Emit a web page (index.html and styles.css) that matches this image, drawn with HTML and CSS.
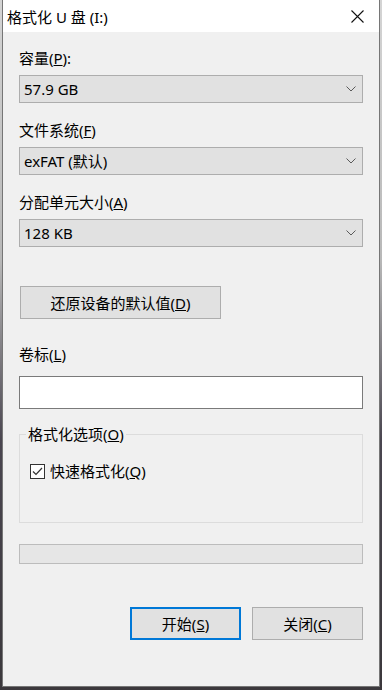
FILE: index.html
```html
<!DOCTYPE html>
<html>
<head>
    <title>格式化 U 盘 (I:)</title>
    <link rel="stylesheet" href="styles.css">
</head>
<body>
    <div class="window">
        <div class="titlebar">
            <span class="title">格式化 U 盘 (I:)</span>
            <span class="close">
                <svg width="13" height="13" viewBox="0 0 13 13">
                    <path d="M0.5 0.5 L12.5 12.5 M12.5 0.5 L0.5 12.5" stroke="#111" stroke-width="1.1" fill="none"/>
                </svg>
            </span>
        </div>
        <div class="content">
            <label class="field-label">容量(<u>P</u>):</label>
            <div class="combo">
                <span>57.9 GB</span>
                <svg class="chevron" width="10" height="6" viewBox="0 0 10 6"><polyline points="0.5,0.5 5,5 9.5,0.5" fill="none" stroke="#5a5a5a" stroke-width="1"/></svg>
            </div>

            <label class="field-label">文件系统(<u>F</u>)</label>
            <div class="combo">
                <span>exFAT (默认)</span>
                <svg class="chevron" width="10" height="6" viewBox="0 0 10 6"><polyline points="0.5,0.5 5,5 9.5,0.5" fill="none" stroke="#5a5a5a" stroke-width="1"/></svg>
            </div>

            <label class="field-label">分配单元大小(<u>A</u>)</label>
            <div class="combo">
                <span>128 KB</span>
                <svg class="chevron" width="10" height="6" viewBox="0 0 10 6"><polyline points="0.5,0.5 5,5 9.5,0.5" fill="none" stroke="#5a5a5a" stroke-width="1"/></svg>
            </div>

            <button class="btn btn-restore">还原设备的默认值(<u>D</u>)</button>

            <label class="field-label label-volume" for="volume">卷标(<u>L</u>)</label>
            <input type="text" id="volume" class="text-input">

            <fieldset class="group">
                <legend>格式化选项(<u>O</u>)</legend>
                <div class="check-row">
                    <span class="checkbox">
                        <svg width="15" height="15" viewBox="0 0 15 15"><polyline points="3,7.5 6,10.5 12,4" fill="none" stroke="#333" stroke-width="1.2"/></svg>
                    </span>
                    <span>快速格式化(<u>Q</u>)</span>
                </div>
            </fieldset>

            <div class="progress"></div>

            <div class="actions">
                <button class="btn btn-action btn-default">开始(<u>S</u>)</button>
                <button class="btn btn-action">关闭(<u>C</u>)</button>
            </div>
        </div>
    </div>
</body>
</html>
```

FILE: styles.css
```css
html, body {
    margin: 0;
    height: 100%;
}

body {
    background: linear-gradient(#d4d4d4 0, #b8b8b8 260px, #4a4650 440px, #3b383c 100%);
    font-family: "Noto Sans", "Noto Sans CJK SC", sans-serif;
    font-size: 15px;
    color: #000;
    overflow: hidden;
}

.window {
    width: 378px;
    height: 687px;
    margin-left: 2px;
    box-sizing: border-box;
    border: 1px solid #767676;
    border-top: none;
    background: #f0f0f0;
}

.titlebar {
    height: 32px;
    background: #fff;
    display: flex;
    align-items: center;
    justify-content: space-between;
    padding-left: 4px;
}

.title {
    line-height: 20px;
    padding-top: 1px;
}

.close {
    width: 46px;
    height: 32px;
    display: flex;
    align-items: center;
    justify-content: center;
    padding-left: 3px;
    box-sizing: border-box;
}

.content {
    padding: 16px 16px 0 16px;
}

.field-label {
    display: block;
    height: 20px;
    line-height: 20px;
    margin-bottom: 7px;
}

.combo {
    height: 28px;
    box-sizing: border-box;
    border: 1px solid #adadad;
    background: #e1e1e1;
    display: flex;
    align-items: center;
    justify-content: space-between;
    padding: 0 6px 0 4px;
    margin-bottom: 17px;
    line-height: 20px;
}

.btn {
    font-family: inherit;
    font-size: 15px;
    color: #000;
    background: #e1e1e1;
    border: 1px solid #adadad;
    box-sizing: border-box;
    padding: 0;
    line-height: 20px;
}

.btn-restore {
    display: block;
    width: 201px;
    height: 33px;
    margin: 39px 0 0 1px;
}

.label-volume {
    margin-top: 25px;
    margin-bottom: 12px;
}

.text-input {
    display: block;
    width: 100%;
    height: 33px;
    box-sizing: border-box;
    border: 1px solid #7a7a7a;
    background: #fff;
    margin: 0;
}

.group {
    margin: 15px 0 0 0;
    padding: 0 6px 41px 6px;
    border: 1px solid #dcdcdc;
    min-width: 0;
}

.group legend {
    padding: 0 2px;
    line-height: 20px;
}

.check-row {
    display: flex;
    align-items: center;
    gap: 5px;
    margin: 17px 0 0 4px;
    line-height: 20px;
}

.checkbox {
    width: 15px;
    height: 15px;
    box-sizing: border-box;
    border: 1px solid #333;
    background: #fff;
    display: flex;
}

.checkbox svg {
    margin: -1px;
}

.progress {
    height: 20px;
    margin-top: 21px;
    box-sizing: border-box;
    border: 1px solid #bcbcbc;
    background: #e6e6e6;
}

.actions {
    display: flex;
    justify-content: flex-end;
    gap: 11px;
    margin-top: 43px;
}

.btn-action {
    width: 111px;
    height: 33px;
}

.btn-default {
    border: 2px solid #0078d7;
}
```
